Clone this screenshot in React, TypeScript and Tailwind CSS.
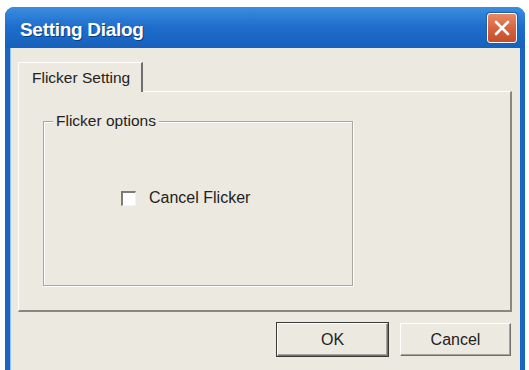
import { Check } from 'lucide-react'

const font = { fontFamily: '"Liberation Sans", Arial, sans-serif' }

function CloseButton() {
  return (
    <div className="w-[30px] h-[30px] rounded-[3px] border border-white bg-gradient-to-b from-[#e88a66] via-[#d9633f] to-[#c24f2c] flex items-center justify-center shadow-[0_0_0_1px_#1d5fae]">
      <svg width="18" height="18" viewBox="0 0 18 18">
        <path d="M3 3 L15 15 M15 3 L3 15" stroke="#fff" strokeWidth="2.6" strokeLinecap="round" />
      </svg>
    </div>
  )
}

function Button({ label, primary }: { label: string; primary?: boolean }) {
  return (
    <div
      className={`w-[113px] h-[35px] ${
        primary ? 'border border-[#3a3a3a]' : 'border border-transparent'
      }`}
    >
      <div className="h-full w-full border-t border-l border-white border-r border-b border-r-[#6f6f6f] border-b-[#6f6f6f] bg-[#ece9e1] flex items-center justify-center text-[16px] text-[#222] shadow-[inset_-1px_-1px_0_#a6a39a]">
        {label}
      </div>
    </div>
  )
}

export default function App() {
  const checked = false
  return (
    <div className="w-[529px] h-[370px] bg-white overflow-hidden pl-[5px] pt-[7px]" style={font}>
      <div className="w-[520px] h-[370px] bg-[#1b64c0] rounded-t-[9px] flex flex-col px-[5px] pb-[5px]">
        {/* Title bar */}
        <div className="h-[41px] -mx-[5px] rounded-t-[9px] bg-gradient-to-b from-[#3a8ee0] via-[#1e6ccb] to-[#1761bd] flex items-center justify-between pl-[15px] pr-[8px]">
          <span className="text-white font-bold text-[19px] tracking-[-0.3px] mt-[6px] [text-shadow:1px_1px_0_#0b3d80]">
            Setting Dialog
          </span>
          <CloseButton />
        </div>

        {/* Body */}
        <div className="flex-1 bg-[#ece9e1] border-l border-[#8fc0ee] flex flex-col pl-[7px] pr-[8px] pt-[14px]">
          {/* Tab strip */}
          <div className="flex">
            <div className="h-[30px] w-[125px] border-t border-l border-white border-r-2 border-r-[#6f6f6f] rounded-tl-[2px] flex items-center pl-[13px] text-[15.5px] text-[#222] bg-[#ece9e1] relative z-10 -mb-px">
              Flicker Setting
            </div>
          </div>

          {/* Tab panel */}
          <div className="h-[221px] border-t border-l border-white border-r-2 border-b-2 border-r-[#8a8780] border-b-[#8a8780] pl-[24px] pt-[29px]">
            {/* Group box */}
            <div className="relative w-[310px] h-[165px] border border-[#a9a69e] shadow-[1px_1px_0_#fff,inset_1px_1px_0_#fff]">
              <span className="absolute -top-[10px] left-[9px] bg-[#ece9e1] px-[3px] text-[15.5px] leading-[18px] text-[#222]">
                Flicker options
              </span>
              <div className="flex items-center gap-[13px] pl-[77px] pt-[64px]">
                <div className="w-[15px] h-[15px] border-t-2 border-l-2 border-[#7d7b75] border-r border-b border-r-[#f4f3ef] border-b-[#f4f3ef] bg-white flex items-center justify-center">
                  {checked && <Check size={12} />}
                </div>
                <span className="text-[16px] text-[#222]">Cancel Flicker</span>
              </div>
            </div>
          </div>

          {/* Buttons */}
          <div className="flex justify-end gap-[10px] pt-[10px]">
            <Button label="OK" primary />
            <Button label="Cancel" />
          </div>
        </div>
      </div>
    </div>
  )
}
